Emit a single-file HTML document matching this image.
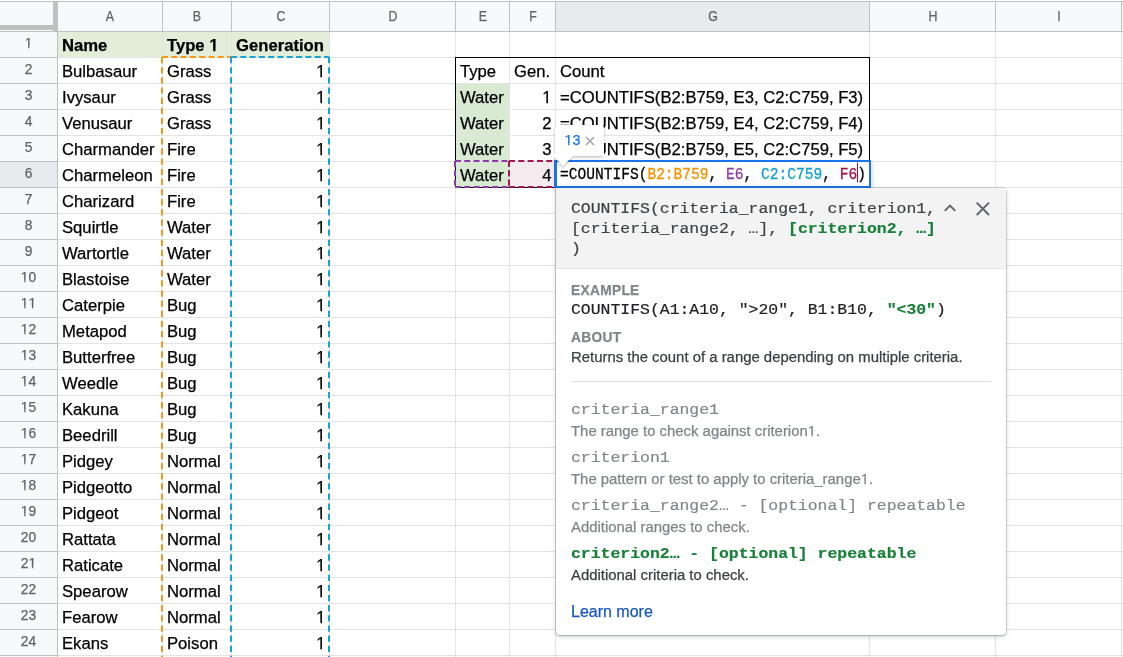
<!DOCTYPE html>
<html><head><meta charset="utf-8"><style>
html,body{margin:0;padding:0;width:1123px;height:657px;overflow:hidden;background:#fff}
body{position:relative;font-family:"Liberation Sans", sans-serif;color:#000}
div{position:absolute}
.t{white-space:nowrap;-webkit-font-smoothing:antialiased;-webkit-text-stroke:0.25px currentColor}
.one16{display:inline-block;line-height:1em;clip-path:polygon(0 0,100% 0,100% 64%,62% 64%,62% 100%,44.5% 100%,44.5% 64%,0 64%)}
.oneb16{display:inline-block;line-height:1em;clip-path:polygon(0 0,100% 0,100% 64.1%,67.2% 64.1%,67.2% 100%,41.5% 100%,41.5% 64.1%,0 64.1%)}
.one13{display:inline-block;line-height:1em;clip-path:polygon(0 0,100% 0,100% 64.4%,62% 64.4%,62% 100%,44.5% 100%,44.5% 64.4%,0 64.4%)}
.one14{display:inline-block;line-height:1em;clip-path:polygon(0 0,100% 0,100% 72.2%,62% 72.2%,62% 100%,44.5% 100%,44.5% 72.2%,0 72.2%)}
.one15{display:inline-block;line-height:1em;clip-path:polygon(0 0,100% 0,100% 67.5%,62% 67.5%,62% 100%,44.5% 100%,44.5% 67.5%,0 67.5%)}
.cur{display:inline-block;width:1px;height:17px;background:#a50e4a;vertical-align:-3px;margin-right:-1px}
b{font-weight:bold}
</style></head><body>
<div id="wrap" style="left:0;top:0;width:1123px;height:657px;overflow:hidden;background:#fff;will-change:transform">
<div style="left:0px;top:0px;width:1123px;height:657px;background:#fff"></div>
<div style="left:0px;top:2px;width:1123px;height:29px;background:#f8f9fa"></div>
<div style="left:556px;top:2px;width:313px;height:29px;background:#e8eaed"></div>
<div style="left:0px;top:32px;width:57px;height:625px;background:#f8f9fa"></div>
<div style="left:0px;top:162px;width:57px;height:25px;background:#e8eaed"></div>
<div style="left:58px;top:32px;width:271px;height:25px;background:#e2eeda"></div>
<div style="left:456px;top:84px;width:53px;height:103px;background:#d9ead3"></div>
<div style="left:510px;top:162px;width:45px;height:25px;background:#f5eaee"></div>
<div style="left:58px;top:57px;width:1065px;height:1px;background:#e2e3e3"></div>
<div style="left:0px;top:57px;width:57px;height:1px;background:#c0c0c0"></div>
<div style="left:58px;top:83px;width:1065px;height:1px;background:#e2e3e3"></div>
<div style="left:0px;top:83px;width:57px;height:1px;background:#c0c0c0"></div>
<div style="left:58px;top:109px;width:1065px;height:1px;background:#e2e3e3"></div>
<div style="left:0px;top:109px;width:57px;height:1px;background:#c0c0c0"></div>
<div style="left:58px;top:135px;width:1065px;height:1px;background:#e2e3e3"></div>
<div style="left:0px;top:135px;width:57px;height:1px;background:#c0c0c0"></div>
<div style="left:58px;top:161px;width:1065px;height:1px;background:#e2e3e3"></div>
<div style="left:0px;top:161px;width:57px;height:1px;background:#c0c0c0"></div>
<div style="left:58px;top:187px;width:1065px;height:1px;background:#e2e3e3"></div>
<div style="left:0px;top:187px;width:57px;height:1px;background:#c0c0c0"></div>
<div style="left:58px;top:213px;width:1065px;height:1px;background:#e2e3e3"></div>
<div style="left:0px;top:213px;width:57px;height:1px;background:#c0c0c0"></div>
<div style="left:58px;top:239px;width:1065px;height:1px;background:#e2e3e3"></div>
<div style="left:0px;top:239px;width:57px;height:1px;background:#c0c0c0"></div>
<div style="left:58px;top:265px;width:1065px;height:1px;background:#e2e3e3"></div>
<div style="left:0px;top:265px;width:57px;height:1px;background:#c0c0c0"></div>
<div style="left:58px;top:291px;width:1065px;height:1px;background:#e2e3e3"></div>
<div style="left:0px;top:291px;width:57px;height:1px;background:#c0c0c0"></div>
<div style="left:58px;top:317px;width:1065px;height:1px;background:#e2e3e3"></div>
<div style="left:0px;top:317px;width:57px;height:1px;background:#c0c0c0"></div>
<div style="left:58px;top:343px;width:1065px;height:1px;background:#e2e3e3"></div>
<div style="left:0px;top:343px;width:57px;height:1px;background:#c0c0c0"></div>
<div style="left:58px;top:369px;width:1065px;height:1px;background:#e2e3e3"></div>
<div style="left:0px;top:369px;width:57px;height:1px;background:#c0c0c0"></div>
<div style="left:58px;top:395px;width:1065px;height:1px;background:#e2e3e3"></div>
<div style="left:0px;top:395px;width:57px;height:1px;background:#c0c0c0"></div>
<div style="left:58px;top:421px;width:1065px;height:1px;background:#e2e3e3"></div>
<div style="left:0px;top:421px;width:57px;height:1px;background:#c0c0c0"></div>
<div style="left:58px;top:447px;width:1065px;height:1px;background:#e2e3e3"></div>
<div style="left:0px;top:447px;width:57px;height:1px;background:#c0c0c0"></div>
<div style="left:58px;top:473px;width:1065px;height:1px;background:#e2e3e3"></div>
<div style="left:0px;top:473px;width:57px;height:1px;background:#c0c0c0"></div>
<div style="left:58px;top:499px;width:1065px;height:1px;background:#e2e3e3"></div>
<div style="left:0px;top:499px;width:57px;height:1px;background:#c0c0c0"></div>
<div style="left:58px;top:525px;width:1065px;height:1px;background:#e2e3e3"></div>
<div style="left:0px;top:525px;width:57px;height:1px;background:#c0c0c0"></div>
<div style="left:58px;top:551px;width:1065px;height:1px;background:#e2e3e3"></div>
<div style="left:0px;top:551px;width:57px;height:1px;background:#c0c0c0"></div>
<div style="left:58px;top:577px;width:1065px;height:1px;background:#e2e3e3"></div>
<div style="left:0px;top:577px;width:57px;height:1px;background:#c0c0c0"></div>
<div style="left:58px;top:603px;width:1065px;height:1px;background:#e2e3e3"></div>
<div style="left:0px;top:603px;width:57px;height:1px;background:#c0c0c0"></div>
<div style="left:58px;top:629px;width:1065px;height:1px;background:#e2e3e3"></div>
<div style="left:0px;top:629px;width:57px;height:1px;background:#c0c0c0"></div>
<div style="left:58px;top:655px;width:1065px;height:1px;background:#e2e3e3"></div>
<div style="left:0px;top:655px;width:57px;height:1px;background:#c0c0c0"></div>
<div style="left:162px;top:32px;width:1px;height:625px;background:#e2e3e3"></div>
<div style="left:162px;top:2px;width:1px;height:29px;background:#c0c0c0"></div>
<div style="left:231px;top:32px;width:1px;height:625px;background:#e2e3e3"></div>
<div style="left:231px;top:2px;width:1px;height:29px;background:#c0c0c0"></div>
<div style="left:329px;top:32px;width:1px;height:625px;background:#e2e3e3"></div>
<div style="left:329px;top:2px;width:1px;height:29px;background:#c0c0c0"></div>
<div style="left:455px;top:32px;width:1px;height:625px;background:#e2e3e3"></div>
<div style="left:455px;top:2px;width:1px;height:29px;background:#c0c0c0"></div>
<div style="left:509px;top:32px;width:1px;height:625px;background:#e2e3e3"></div>
<div style="left:509px;top:2px;width:1px;height:29px;background:#c0c0c0"></div>
<div style="left:555px;top:32px;width:1px;height:625px;background:#e2e3e3"></div>
<div style="left:555px;top:2px;width:1px;height:29px;background:#c0c0c0"></div>
<div style="left:869px;top:32px;width:1px;height:625px;background:#e2e3e3"></div>
<div style="left:869px;top:2px;width:1px;height:29px;background:#c0c0c0"></div>
<div style="left:995px;top:32px;width:1px;height:625px;background:#e2e3e3"></div>
<div style="left:995px;top:2px;width:1px;height:29px;background:#c0c0c0"></div>
<div style="left:1121px;top:32px;width:1px;height:625px;background:#e2e3e3"></div>
<div style="left:1121px;top:2px;width:1px;height:29px;background:#c0c0c0"></div>
<div style="left:0px;top:1px;width:1123px;height:1px;background:#c0c0c0"></div>
<div style="left:0px;top:31px;width:1123px;height:1px;background:#c0c0c0"></div>
<div style="left:57px;top:2px;width:1px;height:655px;background:#c0c0c0"></div>
<div style="left:53px;top:2px;width:5px;height:29px;background:#bfc0c0"></div>
<div style="left:0px;top:25px;width:58px;height:5px;background:#bfc0c0"></div>
<div class="t" style="left:80.0px;width:60px;top:7.94px;line-height:18px;font-size:13.75px;text-align:center;color:#5f6368;transform:scaleX(0.9)">A</div>
<div class="t" style="left:167.0px;width:60px;top:7.94px;line-height:18px;font-size:13.75px;text-align:center;color:#5f6368;transform:scaleX(0.9)">B</div>
<div class="t" style="left:250.5px;width:60px;top:7.94px;line-height:18px;font-size:13.75px;text-align:center;color:#5f6368;transform:scaleX(0.9)">C</div>
<div class="t" style="left:362.5px;width:60px;top:7.94px;line-height:18px;font-size:13.75px;text-align:center;color:#5f6368;transform:scaleX(0.9)">D</div>
<div class="t" style="left:452.5px;width:60px;top:7.94px;line-height:18px;font-size:13.75px;text-align:center;color:#5f6368;transform:scaleX(0.9)">E</div>
<div class="t" style="left:502.5px;width:60px;top:7.94px;line-height:18px;font-size:13.75px;text-align:center;color:#5f6368;transform:scaleX(0.9)">F</div>
<div class="t" style="left:682.5px;width:60px;top:7.94px;line-height:18px;font-size:13.75px;text-align:center;color:#5f6368;transform:scaleX(0.9)">G</div>
<div class="t" style="left:902.5px;width:60px;top:7.94px;line-height:18px;font-size:13.75px;text-align:center;color:#5f6368;transform:scaleX(0.9)">H</div>
<div class="t" style="left:1028.5px;width:60px;top:7.94px;line-height:18px;font-size:13.75px;text-align:center;color:#5f6368;transform:scaleX(0.9)">I</div>
<div class="t" style="left:0.5px;width:56px;top:34.94px;line-height:18px;font-size:13.75px;text-align:center;color:#5f6368"><span class="one13">1</span></div>
<div class="t" style="left:0.5px;width:56px;top:60.94px;line-height:18px;font-size:13.75px;text-align:center;color:#5f6368">2</div>
<div class="t" style="left:0.5px;width:56px;top:86.94px;line-height:18px;font-size:13.75px;text-align:center;color:#5f6368">3</div>
<div class="t" style="left:0.5px;width:56px;top:112.94px;line-height:18px;font-size:13.75px;text-align:center;color:#5f6368">4</div>
<div class="t" style="left:0.5px;width:56px;top:138.94px;line-height:18px;font-size:13.75px;text-align:center;color:#5f6368">5</div>
<div class="t" style="left:0.5px;width:56px;top:164.94px;line-height:18px;font-size:13.75px;text-align:center;color:#5f6368">6</div>
<div class="t" style="left:0.5px;width:56px;top:190.94px;line-height:18px;font-size:13.75px;text-align:center;color:#5f6368">7</div>
<div class="t" style="left:0.5px;width:56px;top:216.94px;line-height:18px;font-size:13.75px;text-align:center;color:#5f6368">8</div>
<div class="t" style="left:0.5px;width:56px;top:242.94px;line-height:18px;font-size:13.75px;text-align:center;color:#5f6368">9</div>
<div class="t" style="left:0.5px;width:56px;top:268.94px;line-height:18px;font-size:13.75px;text-align:center;color:#5f6368"><span class="one13">1</span>0</div>
<div class="t" style="left:0.5px;width:56px;top:294.94px;line-height:18px;font-size:13.75px;text-align:center;color:#5f6368"><span class="one13">1</span><span class="one13">1</span></div>
<div class="t" style="left:0.5px;width:56px;top:320.94px;line-height:18px;font-size:13.75px;text-align:center;color:#5f6368"><span class="one13">1</span>2</div>
<div class="t" style="left:0.5px;width:56px;top:346.94px;line-height:18px;font-size:13.75px;text-align:center;color:#5f6368"><span class="one13">1</span>3</div>
<div class="t" style="left:0.5px;width:56px;top:372.94px;line-height:18px;font-size:13.75px;text-align:center;color:#5f6368"><span class="one13">1</span>4</div>
<div class="t" style="left:0.5px;width:56px;top:398.94px;line-height:18px;font-size:13.75px;text-align:center;color:#5f6368"><span class="one13">1</span>5</div>
<div class="t" style="left:0.5px;width:56px;top:424.94px;line-height:18px;font-size:13.75px;text-align:center;color:#5f6368"><span class="one13">1</span>6</div>
<div class="t" style="left:0.5px;width:56px;top:450.94px;line-height:18px;font-size:13.75px;text-align:center;color:#5f6368"><span class="one13">1</span>7</div>
<div class="t" style="left:0.5px;width:56px;top:476.94px;line-height:18px;font-size:13.75px;text-align:center;color:#5f6368"><span class="one13">1</span>8</div>
<div class="t" style="left:0.5px;width:56px;top:502.94px;line-height:18px;font-size:13.75px;text-align:center;color:#5f6368"><span class="one13">1</span>9</div>
<div class="t" style="left:0.5px;width:56px;top:528.94px;line-height:18px;font-size:13.75px;text-align:center;color:#5f6368">20</div>
<div class="t" style="left:0.5px;width:56px;top:554.94px;line-height:18px;font-size:13.75px;text-align:center;color:#5f6368">2<span class="one13">1</span></div>
<div class="t" style="left:0.5px;width:56px;top:580.94px;line-height:18px;font-size:13.75px;text-align:center;color:#5f6368">22</div>
<div class="t" style="left:0.5px;width:56px;top:606.94px;line-height:18px;font-size:13.75px;text-align:center;color:#5f6368">23</div>
<div class="t" style="left:0.5px;width:56px;top:632.94px;line-height:18px;font-size:13.75px;text-align:center;color:#5f6368">24</div>
<div class="t" style="left:62px;top:35.22px;line-height:22px;font-size:16.67px;font-weight:bold">Name</div>
<div class="t" style="left:167px;top:35.22px;line-height:22px;font-size:16.67px;font-weight:bold">Type <span class="oneb16">1</span></div>
<div class="t" style="left:236px;top:35.22px;line-height:22px;font-size:16.67px;font-weight:bold">Generation</div>
<div class="t" style="left:62px;top:61.22px;line-height:22px;font-size:16.67px;">Bulbasaur</div>
<div class="t" style="left:167px;top:61.22px;line-height:22px;font-size:16.67px;">Grass</div>
<div class="t" style="right:797.5px;top:61.22px;line-height:22px;font-size:16.67px;text-align:right;"><span class="one16">1</span></div>
<div class="t" style="left:62px;top:87.22px;line-height:22px;font-size:16.67px;">Ivysaur</div>
<div class="t" style="left:167px;top:87.22px;line-height:22px;font-size:16.67px;">Grass</div>
<div class="t" style="right:797.5px;top:87.22px;line-height:22px;font-size:16.67px;text-align:right;"><span class="one16">1</span></div>
<div class="t" style="left:62px;top:113.22px;line-height:22px;font-size:16.67px;">Venusaur</div>
<div class="t" style="left:167px;top:113.22px;line-height:22px;font-size:16.67px;">Grass</div>
<div class="t" style="right:797.5px;top:113.22px;line-height:22px;font-size:16.67px;text-align:right;"><span class="one16">1</span></div>
<div class="t" style="left:62px;top:139.22px;line-height:22px;font-size:16.67px;">Charmander</div>
<div class="t" style="left:167px;top:139.22px;line-height:22px;font-size:16.67px;">Fire</div>
<div class="t" style="right:797.5px;top:139.22px;line-height:22px;font-size:16.67px;text-align:right;"><span class="one16">1</span></div>
<div class="t" style="left:62px;top:165.22px;line-height:22px;font-size:16.67px;">Charmeleon</div>
<div class="t" style="left:167px;top:165.22px;line-height:22px;font-size:16.67px;">Fire</div>
<div class="t" style="right:797.5px;top:165.22px;line-height:22px;font-size:16.67px;text-align:right;"><span class="one16">1</span></div>
<div class="t" style="left:62px;top:191.22px;line-height:22px;font-size:16.67px;">Charizard</div>
<div class="t" style="left:167px;top:191.22px;line-height:22px;font-size:16.67px;">Fire</div>
<div class="t" style="right:797.5px;top:191.22px;line-height:22px;font-size:16.67px;text-align:right;"><span class="one16">1</span></div>
<div class="t" style="left:62px;top:217.22px;line-height:22px;font-size:16.67px;">Squirtle</div>
<div class="t" style="left:167px;top:217.22px;line-height:22px;font-size:16.67px;">Water</div>
<div class="t" style="right:797.5px;top:217.22px;line-height:22px;font-size:16.67px;text-align:right;"><span class="one16">1</span></div>
<div class="t" style="left:62px;top:243.22px;line-height:22px;font-size:16.67px;">Wartortle</div>
<div class="t" style="left:167px;top:243.22px;line-height:22px;font-size:16.67px;">Water</div>
<div class="t" style="right:797.5px;top:243.22px;line-height:22px;font-size:16.67px;text-align:right;"><span class="one16">1</span></div>
<div class="t" style="left:62px;top:269.22px;line-height:22px;font-size:16.67px;">Blastoise</div>
<div class="t" style="left:167px;top:269.22px;line-height:22px;font-size:16.67px;">Water</div>
<div class="t" style="right:797.5px;top:269.22px;line-height:22px;font-size:16.67px;text-align:right;"><span class="one16">1</span></div>
<div class="t" style="left:62px;top:295.22px;line-height:22px;font-size:16.67px;">Caterpie</div>
<div class="t" style="left:167px;top:295.22px;line-height:22px;font-size:16.67px;">Bug</div>
<div class="t" style="right:797.5px;top:295.22px;line-height:22px;font-size:16.67px;text-align:right;"><span class="one16">1</span></div>
<div class="t" style="left:62px;top:321.22px;line-height:22px;font-size:16.67px;">Metapod</div>
<div class="t" style="left:167px;top:321.22px;line-height:22px;font-size:16.67px;">Bug</div>
<div class="t" style="right:797.5px;top:321.22px;line-height:22px;font-size:16.67px;text-align:right;"><span class="one16">1</span></div>
<div class="t" style="left:62px;top:347.22px;line-height:22px;font-size:16.67px;">Butterfree</div>
<div class="t" style="left:167px;top:347.22px;line-height:22px;font-size:16.67px;">Bug</div>
<div class="t" style="right:797.5px;top:347.22px;line-height:22px;font-size:16.67px;text-align:right;"><span class="one16">1</span></div>
<div class="t" style="left:62px;top:373.22px;line-height:22px;font-size:16.67px;">Weedle</div>
<div class="t" style="left:167px;top:373.22px;line-height:22px;font-size:16.67px;">Bug</div>
<div class="t" style="right:797.5px;top:373.22px;line-height:22px;font-size:16.67px;text-align:right;"><span class="one16">1</span></div>
<div class="t" style="left:62px;top:399.22px;line-height:22px;font-size:16.67px;">Kakuna</div>
<div class="t" style="left:167px;top:399.22px;line-height:22px;font-size:16.67px;">Bug</div>
<div class="t" style="right:797.5px;top:399.22px;line-height:22px;font-size:16.67px;text-align:right;"><span class="one16">1</span></div>
<div class="t" style="left:62px;top:425.22px;line-height:22px;font-size:16.67px;">Beedrill</div>
<div class="t" style="left:167px;top:425.22px;line-height:22px;font-size:16.67px;">Bug</div>
<div class="t" style="right:797.5px;top:425.22px;line-height:22px;font-size:16.67px;text-align:right;"><span class="one16">1</span></div>
<div class="t" style="left:62px;top:451.22px;line-height:22px;font-size:16.67px;">Pidgey</div>
<div class="t" style="left:167px;top:451.22px;line-height:22px;font-size:16.67px;">Normal</div>
<div class="t" style="right:797.5px;top:451.22px;line-height:22px;font-size:16.67px;text-align:right;"><span class="one16">1</span></div>
<div class="t" style="left:62px;top:477.22px;line-height:22px;font-size:16.67px;">Pidgeotto</div>
<div class="t" style="left:167px;top:477.22px;line-height:22px;font-size:16.67px;">Normal</div>
<div class="t" style="right:797.5px;top:477.22px;line-height:22px;font-size:16.67px;text-align:right;"><span class="one16">1</span></div>
<div class="t" style="left:62px;top:503.22px;line-height:22px;font-size:16.67px;">Pidgeot</div>
<div class="t" style="left:167px;top:503.22px;line-height:22px;font-size:16.67px;">Normal</div>
<div class="t" style="right:797.5px;top:503.22px;line-height:22px;font-size:16.67px;text-align:right;"><span class="one16">1</span></div>
<div class="t" style="left:62px;top:529.22px;line-height:22px;font-size:16.67px;">Rattata</div>
<div class="t" style="left:167px;top:529.22px;line-height:22px;font-size:16.67px;">Normal</div>
<div class="t" style="right:797.5px;top:529.22px;line-height:22px;font-size:16.67px;text-align:right;"><span class="one16">1</span></div>
<div class="t" style="left:62px;top:555.22px;line-height:22px;font-size:16.67px;">Raticate</div>
<div class="t" style="left:167px;top:555.22px;line-height:22px;font-size:16.67px;">Normal</div>
<div class="t" style="right:797.5px;top:555.22px;line-height:22px;font-size:16.67px;text-align:right;"><span class="one16">1</span></div>
<div class="t" style="left:62px;top:581.22px;line-height:22px;font-size:16.67px;">Spearow</div>
<div class="t" style="left:167px;top:581.22px;line-height:22px;font-size:16.67px;">Normal</div>
<div class="t" style="right:797.5px;top:581.22px;line-height:22px;font-size:16.67px;text-align:right;"><span class="one16">1</span></div>
<div class="t" style="left:62px;top:607.22px;line-height:22px;font-size:16.67px;">Fearow</div>
<div class="t" style="left:167px;top:607.22px;line-height:22px;font-size:16.67px;">Normal</div>
<div class="t" style="right:797.5px;top:607.22px;line-height:22px;font-size:16.67px;text-align:right;"><span class="one16">1</span></div>
<div class="t" style="left:62px;top:633.22px;line-height:22px;font-size:16.67px;">Ekans</div>
<div class="t" style="left:167px;top:633.22px;line-height:22px;font-size:16.67px;">Poison</div>
<div class="t" style="right:797.5px;top:633.22px;line-height:22px;font-size:16.67px;text-align:right;"><span class="one16">1</span></div>
<div class="t" style="left:460px;top:61.22px;line-height:22px;font-size:16.67px;">Type</div>
<div class="t" style="left:514px;top:61.22px;line-height:22px;font-size:16.67px;">Gen.</div>
<div class="t" style="left:560px;top:61.22px;line-height:22px;font-size:16.67px;">Count</div>
<div class="t" style="left:460px;top:87.22px;line-height:22px;font-size:16.67px;">Water</div>
<div class="t" style="right:571.5px;top:87.22px;line-height:22px;font-size:16.67px;text-align:right;"><span class="one16">1</span></div>
<div class="t" style="left:460px;top:113.22px;line-height:22px;font-size:16.67px;">Water</div>
<div class="t" style="right:571.5px;top:113.22px;line-height:22px;font-size:16.67px;text-align:right;">2</div>
<div class="t" style="left:460px;top:139.22px;line-height:22px;font-size:16.67px;">Water</div>
<div class="t" style="right:571.5px;top:139.22px;line-height:22px;font-size:16.67px;text-align:right;">3</div>
<div class="t" style="left:460px;top:165.22px;line-height:22px;font-size:16.67px;">Water</div>
<div class="t" style="right:571.5px;top:165.22px;line-height:22px;font-size:16.67px;text-align:right;">4</div>
<div class="t" style="left:560px;top:87.22px;line-height:22px;font-size:16.67px;">=COUNTIFS(B2:B759, E3, C2:C759, F3)</div>
<div class="t" style="left:560px;top:113.22px;line-height:22px;font-size:16.67px;">=COUNTIFS(B2:B759, E4, C2:C759, F4)</div>
<div class="t" style="left:560px;top:139.22px;line-height:22px;font-size:16.67px;">=COUNTIFS(B2:B759, E5, C2:C759, F5)</div>
<div style="left:455px;top:57px;width:415px;height:131px;border:1px solid #000;box-sizing:border-box"></div>
<svg width="1123" height="657" style="position:absolute;left:0;top:0"><line x1="162" y1="57" x2="231" y2="57" stroke="#f29a1c" stroke-width="2" stroke-dasharray="6 3.3"/><line x1="162" y1="57" x2="162" y2="667" stroke="#f29a1c" stroke-width="2" stroke-dasharray="6.3 3.85"/><line x1="231" y1="57" x2="329" y2="57" stroke="#1aa3d0" stroke-width="2" stroke-dasharray="6 3.3"/><line x1="231" y1="57" x2="231" y2="667" stroke="#1aa3d0" stroke-width="2" stroke-dasharray="6.3 3.85"/><line x1="329" y1="57" x2="329" y2="667" stroke="#1aa3d0" stroke-width="2" stroke-dasharray="6.3 3.85"/><line x1="455" y1="161" x2="509" y2="161" stroke="#8e3aa6" stroke-width="2" stroke-dasharray="6 3.3"/><line x1="455" y1="161" x2="455" y2="187" stroke="#8e3aa6" stroke-width="2" stroke-dasharray="6 3.3"/><line x1="509" y1="161" x2="509" y2="187" stroke="#8e3aa6" stroke-width="2" stroke-dasharray="6 3.3"/><line x1="455" y1="187" x2="509" y2="187" stroke="#8e3aa6" stroke-width="2" stroke-dasharray="6 3.3"/><line x1="509" y1="161" x2="555" y2="161" stroke="#a8174f" stroke-width="2" stroke-dasharray="6 3.3"/><line x1="509" y1="161" x2="509" y2="187" stroke="#a8174f" stroke-width="2" stroke-dasharray="6 3.3"/><line x1="555" y1="161" x2="555" y2="187" stroke="#a8174f" stroke-width="2" stroke-dasharray="6 3.3"/><line x1="509" y1="187" x2="555" y2="187" stroke="#a8174f" stroke-width="2" stroke-dasharray="6 3.3"/></svg>
<div style="left:554px;top:160px;width:317px;height:28px;border:2px solid #1a73e8;border-left-width:3px;box-sizing:border-box;background:#fff;box-shadow:2px 2px 4px rgba(0,0,0,.12)"></div>
<div class="t" style="left:560px;top:165.12px;line-height:19px;font-size:14.57px;font-family:'Liberation Mono', monospace;transform:scaleY(1.16);transform-origin:0 14.8px">=COUNTIFS(<span style="color:#f09300">B2:B759</span>, <span style="color:#8e3aa6">E6</span>, <span style="color:#12a1cf">C2:C759</span>, <span style="color:#a50e4a">F6</span><span class="cur"></span>)</div>
<div style="left:555px;top:125px;width:49px;height:31px;background:#fff;border-radius:4px;box-shadow:0 1px 3px rgba(0,0,0,.3)"></div>
<div style="left:556px;top:149px;width:14px;height:14px;background:#fff;transform:rotate(45deg);box-shadow:2px 2px 2px rgba(0,0,0,.15)"></div>
<div style="left:555px;top:140px;width:49px;height:16px;background:#fff"></div>
<div class="t" style="left:564.5px;top:130.51px;line-height:19px;font-size:14.4px;color:#1a73e8"><span class="one14">1</span>3</div>
<svg width="10" height="10" style="position:absolute;left:584.5px;top:136px"><path d="M1 1L9 9M9 1L1 9" stroke="#a0a4a8" stroke-width="1.5"/></svg>
<div style="left:556px;top:188px;width:450px;height:447px;background:#fff;border-radius:0 4px 4px 4px;box-shadow:0 0 0 1px rgba(60,64,67,.12),0 1px 2px rgba(60,64,67,.3),0 2px 5px 1px rgba(60,64,67,.12);overflow:hidden"><div style="left:0;top:0;width:450px;height:80px;background:#f3f3f3;border-bottom:1px solid #e6e6e6"></div></div>
<div class="t" style="left:571px;top:198.12px;line-height:21px;font-size:16.45px;font-family:'Liberation Mono', monospace;-webkit-text-stroke:0.2px currentColor;color:#3c4043;transform:scaleY(0.88);transform-origin:0 14.88px">COUNTIFS(criteria_range1, criterion1,</div>
<div class="t" style="left:571px;top:218.12px;line-height:21px;font-size:16.45px;font-family:'Liberation Mono', monospace;-webkit-text-stroke:0.2px currentColor;color:#3c4043;transform:scaleY(0.88);transform-origin:0 14.88px">[criteria_range2, …], <b style="color:#188038">[criterion2, …]</b></div>
<div class="t" style="left:571px;top:238.12px;line-height:21px;font-size:16.45px;font-family:'Liberation Mono', monospace;-webkit-text-stroke:0.2px currentColor;color:#3c4043;transform:scaleY(0.88);transform-origin:0 14.88px">)</div>
<svg width="14" height="10" style="position:absolute;left:943px;top:203px"><path d="M1.8 7.8L7 2.6L12.2 7.8" fill="none" stroke="#5f6368" stroke-width="1.9"/></svg>
<svg width="16" height="16" style="position:absolute;left:974.5px;top:200.5px"><path d="M1.7 1.7L14 14M14 1.7L1.7 14" fill="none" stroke="#5f6368" stroke-width="1.9"/></svg>
<div class="t" style="left:571px;top:282.24px;line-height:18px;font-size:13.75px;font-weight:bold;color:#80868b;letter-spacing:0.3px">EXAMPLE</div>
<div class="t" style="left:571px;top:299.32px;line-height:21px;font-size:16.45px;font-family:'Liberation Mono', monospace;-webkit-text-stroke:0.2px currentColor;color:#202124;transform:scaleY(0.88);transform-origin:0 14.88px">COUNTIFS(A1:A10, "&gt;20", B1:B10, <b style="color:#188038">"&lt;30"</b>)</div>
<div class="t" style="left:571px;top:328.84px;line-height:18px;font-size:13.75px;font-weight:bold;color:#80868b;letter-spacing:0.3px">ABOUT</div>
<div class="t" style="left:571px;top:347.64px;line-height:19px;font-size:14.9px;color:#3c4043">Returns the count of a range depending on multiple criteria.</div>
<div style="left:571px;top:381px;width:420px;height:1px;background:#dadce0"></div>
<div class="t" style="left:571px;top:399.32px;line-height:21px;font-size:16.45px;font-family:'Liberation Mono', monospace;-webkit-text-stroke:0.2px currentColor;color:#80868b;transform:scaleY(0.88);transform-origin:0 14.88px">criteria_range1</div>
<div class="t" style="left:571px;top:421.84px;line-height:19px;font-size:14.9px;color:#80868b">The range to check against criterion<span class="one15">1</span>.</div>
<div class="t" style="left:571px;top:447.22px;line-height:21px;font-size:16.45px;font-family:'Liberation Mono', monospace;-webkit-text-stroke:0.2px currentColor;color:#80868b;transform:scaleY(0.88);transform-origin:0 14.88px">criterion1</div>
<div class="t" style="left:571px;top:469.84px;line-height:19px;font-size:14.9px;color:#80868b">The pattern or test to apply to criteria_range<span class="one15">1</span>.</div>
<div class="t" style="left:571px;top:495.12px;line-height:21px;font-size:16.45px;font-family:'Liberation Mono', monospace;-webkit-text-stroke:0.2px currentColor;color:#80868b;transform:scaleY(0.88);transform-origin:0 14.88px">criteria_range2… - [optional] repeatable</div>
<div class="t" style="left:571px;top:517.64px;line-height:19px;font-size:14.9px;color:#80868b">Additional ranges to check.</div>
<div class="t" style="left:571px;top:543.12px;line-height:21px;font-size:16.45px;font-family:'Liberation Mono', monospace;-webkit-text-stroke:0.2px currentColor;color:#188038;font-weight:bold;transform:scaleY(0.88);transform-origin:0 14.88px">criterion2… - [optional] repeatable</div>
<div class="t" style="left:571px;top:565.54px;line-height:19px;font-size:14.9px;color:#3c4043">Additional criteria to check.</div>
<div class="t" style="left:571px;top:600.96px;line-height:21px;font-size:16px;color:#1857c7">Learn more</div>
</div>
</body></html>
